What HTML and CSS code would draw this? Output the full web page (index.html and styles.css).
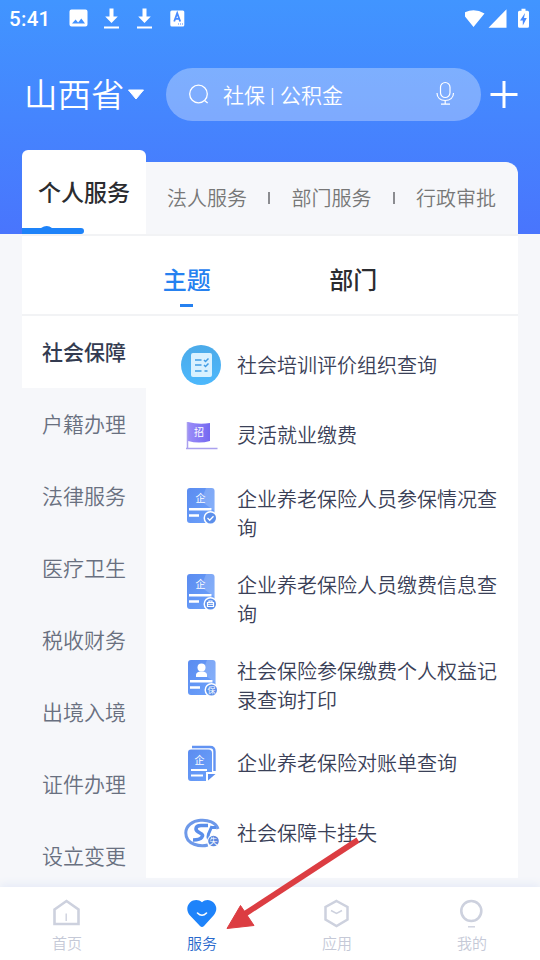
FILE: index.html
```html
<!DOCTYPE html>
<html lang="zh-CN">
<head>
<meta charset="utf-8">
<title>服务</title>
<link rel="stylesheet" href="styles.css">
</head>
<body>
<svg class="defs" width="0" height="0" aria-hidden="true">
  <defs>
    <linearGradient id="doc" x1="0" y1="0" x2="1" y2="1"><stop offset="0" stop-color="#5b8cf0"/><stop offset="1" stop-color="#6da2fb"/></linearGradient>
    <linearGradient id="sky" x1="0" y1="0" x2="0" y2="1"><stop offset="0" stop-color="#4baae9"/><stop offset="1" stop-color="#4db8fc"/></linearGradient>
    <linearGradient id="flag" x1="0" y1="0" x2="1" y2="0"><stop offset="0" stop-color="#9b8df8"/><stop offset="1" stop-color="#7468f1"/></linearGradient>
    <g id="docbase">
      <rect x="6" y="3" width="27.500" height="35" rx="3" fill="url(#doc)"/>
      <path d="M25 3h5.500a3 3 0 0 1 3 3v20L20 16z" fill="#fff" opacity=".18"/>
      <path d="M8 24.200h22.500M8 30.500h10" stroke="#fff" stroke-width="2.600"/>
      <circle cx="29.500" cy="33" r="7" fill="#fff"/>
      <circle cx="29.500" cy="33" r="5.500" fill="#5c8feb"/>
    </g>
  </defs>
</svg>
<div class="app">
  <header class="status">
    <span class="clock">5:41</span>
    <svg class="notices" width="125" height="24" viewBox="0 0 125 24">
      <path fill="#fff" fill-rule="evenodd" d="M4.500 2.500h14a2 2 0 0 1 2 2v13a2 2 0 0 1-2 2h-14a2 2 0 0 1-2-2v-13a2 2 0 0 1 2-2zM5 16.500h13l-3.700-5-3.200 4-2.500-3z"/>
      <path id="dl" fill="#fff" d="M42.500 1.500h4v8h4.300l-6.300 6.500-6.300-6.500h4.300zM37 19.500h15v2H37z"/>
      <use href="#dl" x="33"/>
      <rect x="103.300" y="3.500" width="14" height="16" rx="1.500" fill="#fff"/>
      <path d="M107.200 14.500l3-8.300 3 8.300M108.400 11.800h3.800" fill="none" stroke="#478aff" stroke-width="1.800"/>
      <path d="M111 17h6" stroke="#478aff" stroke-dasharray="1 1"/>
    </svg>
    <svg width="70" height="24" viewBox="0 0 70 24">
      <path fill="#fff" d="M-4 6.800Q7 .2 18 6.800L7 20.200zM40 2.500V21H22zM51.500 5.500A1.500 1.500 0 0 1 53 4h2V2h4v2h2A1.500 1.500 0 0 1 62.500 5.500v14a1.500 1.500 0 0 1-1.500 1.500h-8a1.500 1.500 0 0 1-1.500-1.500z" transform="translate(1.500 -.3)"/>
      <path fill="#478aff" d="M60 6L55 13.500h2.800v5l4-7.500H59z"/>
    </svg>
  </header>
  <div class="search-row">
    <div class="province">山西省</div>
    <svg class="caret" width="18" height="12" viewBox="0 0 18 12"><path d="M1.500 1h15L9 10z" fill="#fff" stroke="#fff" stroke-linejoin="round"/></svg>
    <div class="search">
      <svg width="24" height="24" viewBox="0 0 24 24" fill="none" stroke="#fff" stroke-width="1.300"><circle cx="11.500" cy="11" r="8.800"/><path d="M17.500 17.500l3.200 2.500"/></svg>
      <span>社保 | 公积金</span>
      <svg class="mic" width="20" height="26" viewBox="0 0 20 26" fill="none" stroke="#fff" stroke-width="1.200"><rect x="4.500" y="1.500" width="9.500" height="15" rx="4.750"/><path d="M1 12c0 5 3.500 7.500 8.200 7.500s8.300-2.500 8.300-7.500M9.200 19.500V23M5 23.200h9"/></svg>
    </div>
    <svg class="plus" width="28" height="28" viewBox="0 0 28 28"><path d="M.5 13.500h27M14 0v27" stroke="#fff" stroke-width="3"/></svg>
  </div>

  <main class="panel">
    <nav class="tabs">
      <div class="tab-active">个人服务
        <svg class="tab-mark" width="62" height="9" viewBox="0 0 62 9"><path d="M0 3h19Q25-1 30 3h29a3 3 0 0 1 0 6H0z" fill="#1e83f9"/></svg>
      </div>
      <div class="tab-rest"><span>法人服务</span><i></i><span>部门服务</span><i></i><span>行政审批</span></div>
    </nav>
    <div class="subtabs"><div class="chosen">主题</div><div>部门</div></div>
    <div class="content">
      <aside class="side">
        <div class="current">社会保障</div><div>户籍办理</div><div>法律服务</div><div>医疗卫生</div><div>税收财务</div><div>出境入境</div><div>证件办理</div><div>设立变更</div>
      </aside>
      <ul class="list">
        <li><svg viewBox="0 0 40 40"><circle cx="20" cy="20" r="20" fill="url(#sky)"/><rect x="10" y="8" width="21" height="24" rx="2" fill="#d9f1ff"/><path d="M14 15h6.500M14 20h6.500M14 26h6.500M23 15l1.500 1.500 3-3M23 20l1.500 1.500 3-3M23.500 26h3" fill="none" stroke="#419de5" stroke-width="1.500"/></svg><span>社会培训评价组织查询</span></li>
        <li><svg viewBox="0 0 40 40"><path d="M7 7q11 3 22 1v18q-11 3-22 0z" fill="url(#flag)"/><path d="M6.500 7v26M5 33.500h31.500" fill="none" stroke="#aaa1ee" stroke-width="1.500"/><text x="18" y="20.500" class="glyph g9">招</text></svg><span>灵活就业缴费</span></li>
        <li class="two"><svg viewBox="0 0 40 40"><use href="#docbase"/><text x="19.500" y="17" class="glyph g9">企</text><path d="M26.500 33l2.200 2.200 3.800-4" fill="none" stroke="#fff" stroke-width="1.300"/></svg><span>企业养老保险人员参保情况查询</span></li>
        <li class="two"><svg viewBox="0 0 40 40"><use href="#docbase"/><text x="19.500" y="17" class="glyph g9">企</text><path d="M26.500 31.500h6v4h-6zM28 31v-1h3v1" fill="none" stroke="#fff" stroke-width="1.200"/><path d="M26.500 33.300h6" stroke="#fff"/></svg><span>企业养老保险人员缴费信息查询</span></li>
        <li class="two"><svg viewBox="0 0 40 40"><g transform="translate(1)"><use href="#docbase"/><circle cx="19.500" cy="10.500" r="4" fill="#fff"/><path d="M14 20v-2q0-3 4-3.500h3q4 .5 4 3.500v2z" fill="#fff"/><text x="29.500" y="36" class="glyph g7">保</text></g></svg><span>社会保险参保缴费个人权益记录查询打印</span></li>
        <li><svg viewBox="0 0 40 40"><path d="M11 4h18q4.500 0 4.500 4.500V28" fill="none" stroke="#6293f2" stroke-width="2.400"/><path d="M10 6.500h17.500q3.500 0 3.500 3.500v19h-6v9H10q-3 0-3-3V9.500q0-3 3-3z" fill="url(#doc)"/><path d="M27 31h7.500l-7.500 6.500z" fill="#5e8ff0"/><path d="M10 27h16M10 32.500h12" stroke="#fff" stroke-width="2.200"/><text x="18.500" y="20.500" class="glyph g9">企</text></svg><span>企业养老保险对账单查询</span></li>
        <li><svg viewBox="0 0 40 40"><path d="M37 16C33 3 4.800 4.500 4.800 20c0 12 15 14 22 12" fill="none" stroke="#6e99e9" stroke-width="3"/><path d="M27 12.500h-7q-5 0-5 3.500 0 2 4 4t2 4q-2 3-9 3" fill="none" stroke="#5a8eea" stroke-width="3.600"/><path d="M31 13l-3.500 8q-1 3 0 5M30 14.500h5" fill="none" stroke="#5a8eea" stroke-width="3"/><circle cx="32.500" cy="28" r="6.200" fill="#fff"/><circle cx="32.500" cy="28" r="5.300" fill="#5b87df"/><text x="32.500" y="30.800" class="glyph g7">失</text></svg><span>社会保障卡挂失</span></li>
      </ul>
    </div>
  </main>

  <footer class="nav">
    <div><svg viewBox="0 0 32 32" fill="none" stroke="#cdd1de" stroke-width="2.600"><path d="M3.500 11.500L15.500 3l12 8.500V26h-24z"/><path d="M15.200 15.500V23" stroke-width="1.400"/></svg>首页</div>
    <div class="on"><svg viewBox="0 0 32 32"><path d="M16 4.200c3.500-3.200 8.500-2.600 11.500.3 4 4 3.500 9 0 13L18 28q-2 2-4 0L4 17.500C.5 13.500.3 8 4 4.500 7.500 1.500 12.500 1.200 16 4.200z" fill="#1e83fa"/><path d="M11.500 15q4.500 4.500 9 0" fill="none" stroke="#fff" stroke-width="1.600" stroke-linecap="round"/></svg>服务</div>
    <div><svg viewBox="0 0 32 32" fill="none" stroke="#cdd1de" stroke-width="2.500"><path d="M15.500 3L26.500 9v12.500L15.500 28 4.500 21.500V9z"/><path d="M10 12.500l5.500 3 5.500-3" stroke-width="1.500"/></svg>应用</div>
    <div><svg viewBox="0 0 32 32" fill="none" stroke="#cdd1de" stroke-width="2.600"><circle cx="15.300" cy="13" r="10"/><path d="M12 28.800h7" stroke-width="1.400"/></svg>我的</div>
  </footer>
  <svg class="arrow" width="136" height="96" viewBox="0 0 136 96"><path d="M132 3L18 77.500" stroke="#dc3d42" stroke-width="5.800"/><path d="M1 91.500L14.500 68.500 28 88.500z" fill="#dc3d42" stroke="#dc3d42"/></svg>
</div>
</body>
</html>
```
FILE: styles.css
```css
* { box-sizing: border-box; }
body { margin: 0; background: #f6f7fa; font-family: Roboto, "Noto Sans CJK SC", sans-serif; font-weight: 350; }
.defs { display: block; }
.app { position: relative; display: flex; flex-direction: column; width: 540px; height: 960px; overflow: hidden; background: linear-gradient(#4195ff, #4975fd) top / 100% 234px no-repeat #f6f7fa; }
.status { display: flex; align-items: center; height: 37px; padding: 1px 5px 0 9px; color: #fff; }
.clock { width: 58px; font-size: 20.5px; font-weight: 500; letter-spacing: .3px; }
.notices { margin-right: auto; }
.status svg { flex: none; }
.search-row { display: flex; align-items: center; height: 113px; padding: 2px 21px 0 24px; color: #fff; }
.province { width: 102px; padding-top: 3px; font-size: 33.500px; line-height: 50px; white-space: nowrap; }
.caret { margin-left: 1px; }
.search { display: flex; align-items: center; width: 315px; height: 53px; margin-left: 21px; padding: 0 25px 0 21px; border-radius: 27px; background: rgba(255,255,255,.31); font-size: 21px; }
.search span { margin: 2px auto 0 12px; line-height: 28px; }
.mic { margin-bottom: 2px; }
.plus { flex: none; margin-left: 9px; }
.panel { flex: none; width: 496px; height: 728px; margin: 0 22px; background: transparent; }
.tabs { display: flex; align-items: flex-end; height: 84px; }
.tab-active { position: relative; width: 124px; height: 84px; border-radius: 6px 6px 0 0; background: #fff; color: #2b2c30; font-size: 23px; font-weight: 500; line-height: 88px; text-align: center; }
.tab-mark { position: absolute; left: 0; bottom: 0; }
.tab-rest { display: flex; flex: 1; align-items: center; justify-content: space-between; height: 72px; padding: 0 22px 0 21px; border-radius: 0 12px 0 0; background: #f6f7fa; color: #777; font-size: 20px; line-height: 28px; }
.tab-rest span { padding-top: 2px; }
.tab-rest i { width: 2px; height: 12px; background: #8b8c90; }
.subtabs { display: flex; height: 82px; padding: 0 82px; border: solid #f2f3f5; border-width: 2px 0; background: #fff; color: #2b2c30; font-size: 24px; font-weight: 500; }
.subtabs div { display: flex; flex: 1; flex-direction: column; align-items: center; padding-top: 27px; line-height: 36px; }
.subtabs .chosen { padding-right: 1px; color: #2681f0; }
.chosen::after { width: 13px; height: 3px; margin-top: 5px; background: #2681f0; content: ""; }
.content { display: flex; height: 562px; }
.side { width: 124px; color: #697080; font-size: 21px; }
.side div { height: 72px; line-height: 74px; text-align: center; }
.side .current { background: #fff; color: #333b50; font-weight: 500; }
.list { flex: 1; margin: 0; padding: 14px 20px 0 35px; background: #fff; color: #3a4057; font-size: 20px; line-height: 29px; list-style: none; }
.list li { display: flex; align-items: center; height: 70px; }
.list li.two { height: 86px; }
.list li span { padding-top: 3px; }
.list li.two span { padding-top: 4px; }
.list svg { flex: none; width: 40px; height: 40px; margin-right: 16px; }
.two svg { margin-bottom: 16px; }
.glyph { fill: #fff; text-anchor: middle; font-weight: 400; }
.g9 { font-size: 10px; }
.g7 { font-size: 8px; }
.nav { position: relative; display: flex; height: 73px; margin-top: auto; background: #fff; box-shadow: 0 -3px 8px #e6ebf7; color: #c5c9d7; font-size: 15px; line-height: 22px; }
.nav div { display: flex; flex: 1; flex-direction: column; align-items: center; padding: 11px 1px 0 0; }
.nav svg { display: block; width: 32px; height: 32px; margin-bottom: 3px; }
.nav .on { color: #2969cc; }
.arrow { position: absolute; left: 226px; top: 837px; }
```
